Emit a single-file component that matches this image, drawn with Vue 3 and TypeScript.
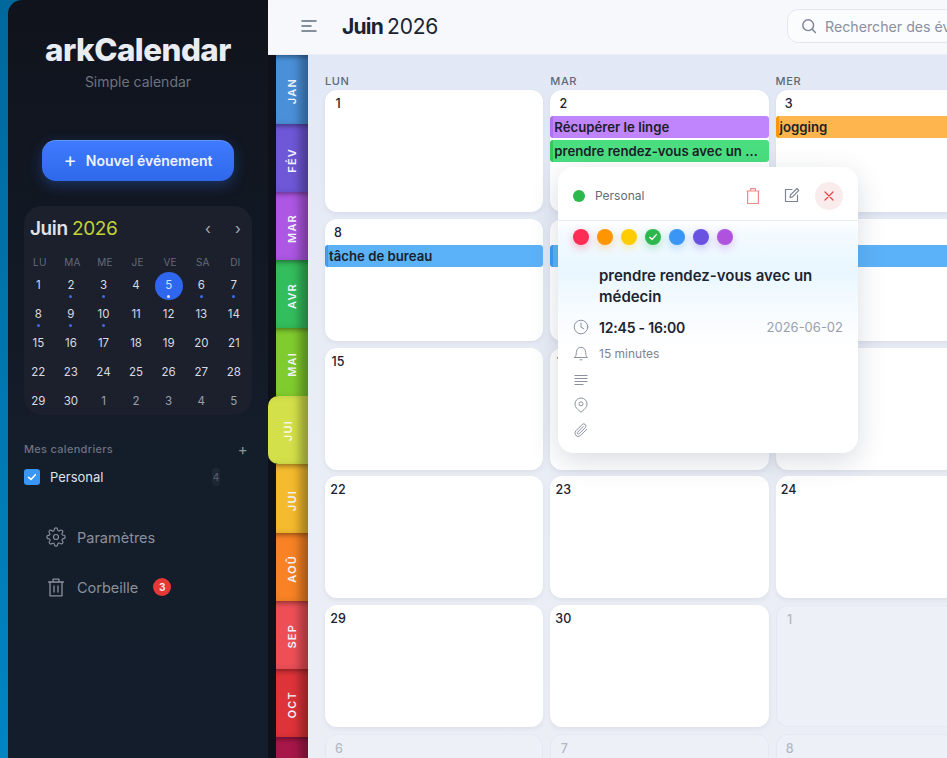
<script setup lang="ts">
const months = [
  { l: 'JAN', c: '#4a90d9' },
  { l: 'FÉV', c: '#6f58d8' },
  { l: 'MAR', c: '#ad57e4' },
  { l: 'AVR', c: '#33bd5c' },
  { l: 'MAI', c: '#80cc2e' },
  { l: 'JUI', c: '#d4e04a', active: true },
  { l: 'JUI', c: '#f5bb2e' },
  { l: 'AOÛ', c: '#f98324' },
  { l: 'SEP', c: '#ee4f57' },
  { l: 'OCT', c: '#de3339' },
  { l: 'NOV', c: '#a8174a' },
]
const miniHead = ['LU', 'MA', 'ME', 'JE', 'VE', 'SA', 'DI']
const miniDays: { d: number; dot?: boolean; today?: boolean; out?: boolean }[] = []
for (let i = 1; i <= 30; i++) {
  miniDays.push({ d: i, dot: [2, 3, 5, 6, 7, 8, 9, 10].includes(i), today: i === 5 })
}
for (let i = 1; i <= 5; i++) miniDays.push({ d: i, out: true })

type Ev = { t: string; c: string; b: string }
const purple = { c: '#c084fc', b: '#b06ff0' }
const green = { c: '#4ade80', b: '#34c759' }
const orange = { c: '#ffb54d', b: '#ff9500' }
const blue = { c: '#5cb2f8', b: '#3d9bf0' }
const events: Record<number, Ev[]> = {
  2: [
    { t: 'Récupérer le linge', ...purple },
    { t: 'prendre rendez-vous avec un médecin', ...green },
  ],
  3: [{ t: 'jogging', ...orange }],
  8: [{ t: 'tâche de bureau', ...blue }],
  9: [{ t: '', ...blue }],
  10: [{ t: '', ...blue }],
}
const cells: { d: number; out: boolean; ev: Ev[] }[] = []
for (let i = 1; i <= 30; i++) cells.push({ d: i, out: false, ev: events[i] || [] })
for (let i = 1; i <= 12; i++) cells.push({ d: i, out: true, ev: [] })
const dayNames = ['LUN', 'MAR', 'MER', 'JEU', 'VEN', 'SAM', 'DIM']
const swatches = ['#ff2d55', '#ff9500', '#ffcc00', '#2db84d', '#3a96f5', '#6a52e0', '#af52de']
</script>

<template>
  <div class="app">
    <aside class="side">
      <div class="brand">arkCalendar</div>
      <div class="tag">Simple calendar</div>
      <button class="new"><span class="plus">+</span> Nouvel événement</button>
      <section class="mini">
        <div class="mini-top">
          <div class="mini-title">Juin <span>2026</span></div>
          <div class="mini-nav"><span>‹</span><span>›</span></div>
        </div>
        <div class="mini-grid">
          <div v-for="h in miniHead" :key="h" class="mini-h">{{ h }}</div>
          <div v-for="(m, i) in miniDays" :key="i" class="mini-d" :class="{ today: m.today, out: m.out }">
            <span>{{ m.d }}</span><i v-if="m.dot"></i>
          </div>
        </div>
      </section>
      <div class="cals-head"><span>Mes calendriers</span><b>+</b></div>
      <div class="cal-row">
        <span class="check">
          <svg width="10" height="10" viewBox="0 0 12 12" fill="none" stroke="#fff" stroke-width="1.8" stroke-linecap="round" stroke-linejoin="round"><path d="M2 6.4 4.8 9 10 3.2" /></svg>
        </span>
        <span class="cal-name">Personal</span>
        <span class="cal-count">4</span>
      </div>
      <nav class="menu">
        <a>
          <svg width="20" height="20" viewBox="0 0 24 24" fill="none" stroke="currentColor" stroke-width="1.4" stroke-linecap="round" stroke-linejoin="round"><circle cx="12" cy="12" r="3" /><path d="M19.4 15a1.65 1.65 0 0 0 .33 1.82l.06.06a2 2 0 1 1-2.83 2.83l-.06-.06a1.65 1.65 0 0 0-2.8 1.17V21a2 2 0 1 1-4 0v-.09a1.65 1.65 0 0 0-2.8-1.17l-.06.06a2 2 0 1 1-2.83-2.83l.06-.06a1.65 1.65 0 0 0-1.17-2.8H3a2 2 0 1 1 0-4h.09a1.65 1.65 0 0 0 1.17-2.8l-.06-.06a2 2 0 1 1 2.83-2.83l.06.06a1.65 1.65 0 0 0 2.8-1.17V3a2 2 0 1 1 4 0v.09a1.65 1.65 0 0 0 2.8 1.17l.06-.06a2 2 0 1 1 2.83 2.83l-.06.06a1.65 1.65 0 0 0 1.17 2.8H21a2 2 0 1 1 0 4h-.09a1.65 1.65 0 0 0-1.51 1z" /></svg>
          Paramètres
        </a>
        <a>
          <svg width="20" height="20" viewBox="0 0 20 20" fill="none" stroke="currentColor" stroke-width="1.3" stroke-linecap="round" stroke-linejoin="round"><path d="M2.500 5h15M7 5V2.200h6V5M4 5v13.800h12V5M8 9v6M12 9v6" /></svg>
          Corbeille <em>3</em>
        </a>
      </nav>
    </aside>

    <div class="right">
      <header class="head">
        <svg class="burger" width="18" height="14" viewBox="0 0 18 14" fill="none" stroke="#5f6b7c" stroke-width="1.5" stroke-linecap="round"><path d="M2 2h14M2 7h9M2 12h14" /></svg>
        <h1>Juin <span>2026</span></h1>
        <div class="search">
          <svg width="16" height="16" viewBox="0 0 16 16" fill="none" stroke="#7b8494" stroke-width="1.4" stroke-linecap="round"><circle cx="7.2" cy="7.2" r="5.4" /><path d="m11.2 11.2 3.2 3.2" /></svg>
          <span>Rechercher des événements</span>
        </div>
      </header>
      <div class="body">
        <div class="tabs">
          <div v-for="(m, i) in months" :key="i" class="tab" :class="{ active: m.active }" :style="{ background: m.c }"><span>{{ m.l }}</span></div>
        </div>
        <main class="main">
          <div class="names"><div v-for="n in dayNames" :key="n">{{ n }}</div></div>
          <div class="grid">
            <div v-for="(c, i) in cells" :key="i" class="cell" :class="{ out: c.out }">
              <div class="num">{{ c.d }}</div>
              <div v-for="(e, j) in c.ev" :key="j" class="ev" :style="{ background: e.c, borderLeftColor: e.b }">{{ e.t }}</div>
            </div>
          </div>
          <div class="pop">
            <div class="pop-top">
              <i class="pop-dot"></i><span class="pop-cal">Personal</span>
              <div class="pop-acts">
                <span class="pop-btn"><svg width="16" height="18" viewBox="0 0 16 18" fill="none" stroke="#f08a8a" stroke-width="1.2" stroke-linejoin="round"><path d="M2.600 4h10.800v12.500H2.600zM5.600 4V1.700h4.800V4M1.500 4h13" /></svg></span>
                <span class="pop-btn"><svg width="17" height="17" viewBox="0 0 17 17" fill="none" stroke="#7b8494" stroke-width="1.2" stroke-linecap="round" stroke-linejoin="round"><path d="M9 2.500H2.500v12h12V8M7 10.500l.5-2.600L14 1.500l1.800 1.800-6.300 6.600z" /></svg></span>
                <span class="pop-btn pop-x"><svg width="10" height="10" viewBox="0 0 10 10" stroke="#e5484d" stroke-width="1.300" stroke-linecap="round"><path d="m1 1 8 8m0-8-8 8" /></svg></span>
              </div>
            </div>
            <div class="swatches">
              <span v-for="s in swatches" :key="s" :style="{ background: s, boxShadow: `0 3px 8px ${s}55` }">
                <svg v-if="s === '#2db84d'" width="10" height="10" viewBox="0 0 12 12" fill="none" stroke="#fff" stroke-width="1.6" stroke-linecap="round" stroke-linejoin="round"><path d="M2 6.400 4.800 9 10 3.200" /></svg>
              </span>
            </div>
            <div class="pop-title">prendre rendez-vous avec un médecin</div>
            <div class="pop-row time">
              <svg width="16" height="16" viewBox="0 0 16 16" fill="none" stroke="#8a92a0" stroke-width="1" stroke-linecap="round"><circle cx="8" cy="8" r="6.800" /><path d="M8 4v4.200l2.800 1.600" /></svg>
              <b>12:45 - 16:00</b><span>2026-06-02</span>
            </div>
            <div class="pop-row rem">
              <svg width="16" height="16" viewBox="0 0 16 16" fill="none" stroke="#8a92a0" stroke-width="1" stroke-linecap="round" stroke-linejoin="round"><path d="M1.500 12.500h13c-1.500-1.200-1.800-2.500-1.800-5 0-3-2-5.200-4.700-5.200S3.300 4.500 3.300 7.500c0 2.500-.3 3.800-1.800 5zM7 14.800h2" /></svg>
              <em>15 minutes</em>
            </div>
            <div class="pop-ico first"><svg width="16" height="16" viewBox="0 0 16 16" stroke="#8a92a0" stroke-width="1"><path d="M1.500 3.500h13M1.500 6.500h13M1.500 9.500h13M1.500 12.500h9" /></svg></div>
            <div class="pop-ico"><svg width="16" height="16" viewBox="0 0 16 16" fill="none" stroke="#8a92a0" stroke-width="1"><path d="M8 15.200C5 12.800 2 10.300 2 7a6 6 0 0 1 12 0c0 3.300-3 5.800-6 8.200z" /><circle cx="8" cy="6.800" r="2" /></svg></div>
            <div class="pop-ico"><svg width="16" height="16" viewBox="0 0 16 16" fill="none" stroke="#8a92a0" stroke-width="1" stroke-linecap="round"><path d="M13.800 7.300 7.600 13.500a3.300 3.300 0 0 1-4.700-4.700l6.400-6.400a2.200 2.200 0 0 1 3.100 3.100l-6.300 6.300a1.100 1.100 0 0 1-1.600-1.500l5.700-5.800" /></svg></div>
          </div>
        </main>
      </div>
    </div>
  </div>
</template>

<style>
html, body { margin: 0; background: #0078ad; }
</style>

<style scoped>
* { box-sizing: border-box; }
.app {
  display: flex; width: 947px; height: 758px; overflow: hidden;
  padding-left: 8px;
  background: linear-gradient(180deg, #00689c, #0085c2);
  font-family: "Inter", "Liberation Sans", sans-serif;
}
.side {
  width: 260px; flex: none; height: 100%;
  background: linear-gradient(180deg, #10131c, #141d2a 60%, #141d2b);
  border-top-left-radius: 14px;
  padding: 35px 16px 0;
  position: relative; z-index: 1;
}
.brand { font: 800 31.300px/30px "Inter", sans-serif; color: #e9ecf3; text-align: center; letter-spacing: -.5px; }
.tag { font-size: 14px; line-height: 18px; color: #6c7280; text-align: center; margin-top: 8px; }
.new {
  display: flex; align-items: center; justify-content: center; gap: 9px;
  width: 192px; height: 41px; margin: 49px 0 0 18px; padding: 0 0 2px;
  border: 0; border-top: 1px solid #5f95ff; border-radius: 14px;
  background: linear-gradient(180deg, #3f7bff, #2f68ea);
  color: #eef3ff; font: 600 14px "Inter", sans-serif;
  box-shadow: 0 4px 14px rgba(48,105,235,.35);
}
.plus { font-size: 20px; font-weight: 400; line-height: 1; }
.mini { width: 228px; height: 209px; margin-top: 25px; background: #1b202c; border-radius: 18px; }
.mini-top { display: flex; justify-content: space-between; align-items: center; height: 44px; padding: 0 10px 0 6px; }
.mini-title { font-size: 19px; font-weight: 600; color: #dfe2e8; letter-spacing: -.4px; }
.mini-title span { color: #c4d435; font-weight: 400; }
.mini-nav { display: flex; gap: 22px; color: #a8adb8; font-size: 15px; }
.mini-nav span { width: 8px; text-align: center; }
.mini-grid { display: grid; grid-template-columns: repeat(7, 32.6px); grid-template-rows: 21px repeat(5, 29px); margin-left: -2px; }
.mini-h { font-size: 10px; color: #646b78; text-align: center; line-height: 24px; height: 21px; letter-spacing: .2px; padding-left: 3px; }
.mini-d { position: relative; text-align: center; font-size: 11.5px; color: #d8dbe2; line-height: 29px; height: 29px; }
.mini-d i { position: absolute; left: 50%; bottom: 2px; width: 3px; height: 3px; margin-left: -1.5px; background: #3a6cf0; border-radius: 50%; }
.mini-d.out { color: #9ca1ad; }
.mini-d.today::before { content: ""; position: absolute; left: 2.300px; top: .5px; width: 28px; height: 28px; border-radius: 50%; background: #2f66ee; }
.mini-d.today span { position: relative; color: #cfe0ff; }
.mini-d.today i { background: #dbe6ff; }
.cals-head { display: flex; justify-content: space-between; align-items: center; margin-top: 24px; padding-right: 4px; font-size: 11px; font-weight: 500; color: #6c7280; letter-spacing: .3px; height: 20px; }
.cals-head b { font-size: 15px; font-weight: 400; color: #8e939e; }
.cal-row { display: flex; align-items: center; margin-top: 9px; height: 18px; font-size: 13px; color: #dfe2e8; }
.check { width: 16px; height: 16px; border-radius: 3px; background: #3a96f5; display: flex; align-items: center; justify-content: center; }
.cal-name { margin-left: 10px; flex: 1; }
.cal-count { width: 8px; height: 18px; margin-right: 32px; background: #1e2633; border-radius: 4px; font-size: 10px; line-height: 18px; color: #5b6270; text-align: center; }
.menu { margin-top: 26px; padding-left: 22px; }
.menu a { display: flex; align-items: center; gap: 11px; height: 50px; font-size: 14.500px; color: #8a909c; }
.menu em { font-style: normal; width: 18px; height: 18px; border-radius: 50%; background: #e53935; color: #fbe9e9; font-size: 10px; font-weight: 700; display: flex; align-items: center; justify-content: center; margin-left: 4px; }
.right { flex: 1; min-width: 0; display: flex; flex-direction: column; position: relative; background: #0e1119; }
.head {
  height: 55px; flex: none; display: flex; align-items: center;
  background: #f6f8fc; padding: 0 0 2px 32px;
  border-bottom: 1px solid #eceff5;
}
.burger { flex: none; }
.head h1 { margin: 0 0 0 24px; font-size: 21px; font-weight: 700; color: #1b2230; letter-spacing: -.8px; white-space: nowrap; flex: none; width: 140px; }
.head h1 span { font-weight: 400; letter-spacing: -.2px; }
.head .search { margin-left: 305px; width: 340px; flex: none; height: 34px; border: 1px solid #e3e6ec; border-radius: 11px; background: #fbfcfe; display: flex; align-items: center; gap: 8px; padding-left: 13px; font-size: 14.200px; color: #8a919e; white-space: nowrap; }
.body { flex: 1; display: flex; min-height: 0; }
.tabs { width: 40px; flex: none; padding-left: 8px; display: flex; flex-direction: column; position: relative; z-index: 2; }
.tab {
  height: 68.100px; flex: none; display: flex; align-items: center; justify-content: center; padding-top: 4px;
  box-shadow: inset -12px 0 10px -4px rgba(0,0,0,.32), inset 0 6px 5px -4px rgba(0,0,0,.35);
}
.tab:first-child { height: 69px; }
.tab span { writing-mode: vertical-rl; transform: rotate(180deg); color: #eef2fa; font-size: 11px; font-weight: 600; letter-spacing: 1.200px; }
.tab.active { margin-left: -8px; border-radius: 10px 0 0 10px; box-shadow: inset -12px 0 10px -4px rgba(0,0,0,.32); padding-top: 0; }
.tab.active span { color: #f6f8e0; }
.main { flex: 1; min-width: 0; position: relative; overflow: hidden; background: linear-gradient(180deg, #e2e8f5, #e9edf5 50%, #ebeef5); padding: 0 0 0 17px; }
.names { display: grid; grid-template-columns: repeat(7, 218.300px); column-gap: 7px; height: 35px; align-items: end; font-size: 11px; font-weight: 500; color: #5f6878; letter-spacing: .6px; padding-bottom: 2px; }
.grid { display: grid; grid-template-columns: repeat(7, 218.300px); column-gap: 7px; row-gap: 6.800px; grid-auto-rows: 122px; }
.cell { background: #fff; border-radius: 12px; padding-top: 6px; box-shadow: 0 2px 4px rgba(140,150,175,.15); overflow: hidden; }
.num { font-size: 12.500px; font-weight: 500; color: #1b2230; width: 26px; text-align: center; line-height: 16px; height: 20px; }
.cell.out { background: #edf0f7; border: 1px solid #e4e8f0; box-shadow: none; }
.cell.out .num { color: #b3b8c4; }
.ev { height: 22px; margin-bottom: 2px; border-left: 3px solid; border-radius: 3px; padding: 0 6px 0 1px; font-size: 13.200px; font-weight: 600; line-height: 22px; color: #1a1f29; white-space: nowrap; overflow: hidden; text-overflow: ellipsis; }
.pop { position: absolute; left: 250px; top: 112px; width: 300px; height: 286px; border-radius: 16px; box-shadow: 0 8px 28px rgba(50,60,90,.18); overflow: hidden; z-index: 3;
  background: linear-gradient(180deg, #fff 54px, #f4faff 66px, #e8f6ff 105px, #f6fbff 140px, #fff 180px);
}
.pop-top { height: 54px; display: flex; align-items: center; padding: 4px 15px 0 15px; border-bottom: 1px solid #e7eaf0; background: #fff; }
.pop-dot { width: 12px; height: 12px; border-radius: 50%; background: #2db84d; }
.pop-cal { margin-left: 10px; font-size: 12px; color: #636b79; flex: 1; }
.pop-acts { display: flex; align-items: center; gap: 10px; }
.pop-btn { width: 28px; height: 28px; display: flex; align-items: center; justify-content: center; }
.pop-x { border-radius: 50%; background: #faecec; }
.swatches { display: flex; gap: 8px; padding: 8px 0 0 15px; height: 40px; }
.swatches span { width: 16px; height: 16px; border-radius: 50%; display: flex; align-items: center; justify-content: center; }
.pop-title { margin: 4px 28px 0 41px; font-size: 15px; font-weight: 600; color: #1d2430; line-height: 21px; }
.pop-row { display: flex; align-items: center; padding: 0 15px 0 15px; }
.time { height: 24px; margin-top: 8px; }
.time b { margin-left: 10px; flex: 1; font-size: 14px; font-weight: 600; color: #1d2430; letter-spacing: -.2px; }
.time span { font-size: 13px; color: #9aa0ab; }
.rem { height: 22px; margin-top: 3px; }
.rem em { margin-left: 10px; font-style: normal; font-size: 12px; color: #7b8494; }
.pop-ico { height: 25px; padding-left: 15px; display: flex; align-items: center; }
.pop-ico.first { margin-top: 3px; }
</style>
